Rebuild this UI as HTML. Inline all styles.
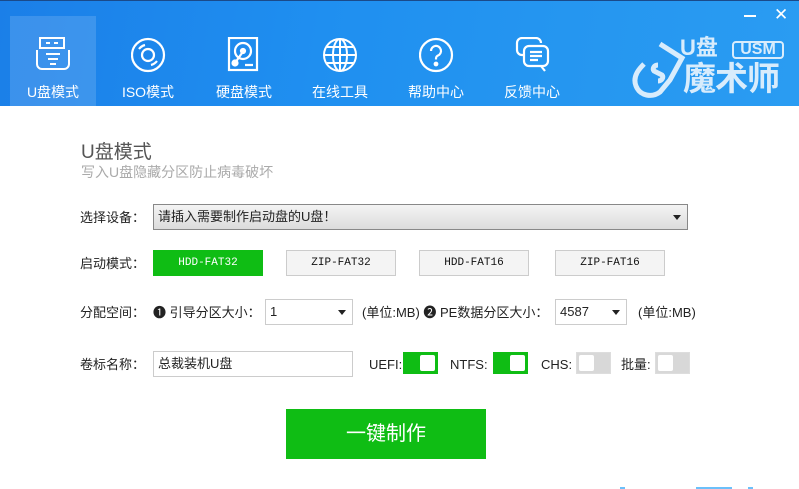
<!DOCTYPE html>
<html><head><meta charset="utf-8"><style>
*{margin:0;padding:0;box-sizing:border-box}
body{width:799px;height:489px;overflow:hidden;background:#fff;font-family:"Liberation Sans","Noto Sans CJK SC",sans-serif;position:relative;font-size:13px;color:#222}
.hdr{position:absolute;left:0;top:0;width:799px;height:106px;background:linear-gradient(100deg,#1b7fe8 0%,#1f8ff0 40%,#2596f0 70%,#2a9cf2 100%);border-top:1px solid #1a4a8a}
.tab{position:absolute;top:15px;width:86px;height:91px;color:#fff;text-align:center;font-size:14px}
.tab.act{background:rgba(255,255,255,.14)}
.tab svg{position:absolute;left:26px;top:21px}
.tab span{position:absolute;left:0;right:0;top:66px;line-height:20px}
.abs{position:absolute}
.lbl{position:absolute;font-size:13px;color:#222;line-height:16px}
.btn{position:absolute;top:250px;width:110px;height:26px;border:1px solid #ccc;background:#f4f4f4;font-family:"Liberation Mono",monospace;font-size:11px;text-align:center;line-height:24px;color:#111}
.sel{position:absolute;border:1px solid #ccc;background:#fff;height:26px;line-height:24px;padding-left:4px}
.tri{position:absolute;right:6px;top:10px;width:0;height:0;border-left:4px solid transparent;border-right:4px solid transparent;border-top:5px solid #222}
.sw{position:absolute;top:352px;width:35px;height:22px;border:1px solid #0fbd14;background:#0fbd14}
.sw i{position:absolute;right:2px;top:2px;width:15px;height:16px;background:#fff;border-radius:2px}
.sw.off{background:#d8d8d8;border-color:#ddd}
.sw.off i{left:2px;right:auto}
</style></head><body>
<div class="hdr">
 <div class="abs" style="left:744px;top:14px;width:12px;height:2px;background:#fff"></div>
 <div class="abs" style="left:774px;top:4px;color:#fff;font-size:17px">✕</div>
 <div class="tab act" style="left:10px"><svg width="34" height="34" viewBox="0 0 34 34" fill="none" stroke="#fff" stroke-width="2"><rect x="4" y="1" width="24" height="10"/><path d="M10 6h4M18 6h4"/><path d="M1 13v14a5 5 0 0 0 5 5h22a5 5 0 0 0 5-5V13"/><path d="M10 17h14M12 22h10M14 27h6"/></svg><span>U盘模式</span></div>
 <div class="tab" style="left:105px"><svg width="36" height="36" viewBox="0 0 36 36" fill="none" stroke="#fff" stroke-width="2.2"><circle cx="17" cy="18" r="16"/><circle cx="17" cy="18" r="6"/><path d="M8 12a11 11 0 0 1 6-4M26 24a11 11 0 0 1-6 4"/></svg><span>ISO模式</span></div>
 <div class="tab" style="left:201px"><svg width="32" height="36" viewBox="0 0 32 36" fill="none" stroke="#fff" stroke-width="2.2"><rect x="2" y="1" width="28" height="32"/><circle cx="16" cy="14" r="8"/><circle cx="16" cy="14" r="2" fill="#fff"/><circle cx="8" cy="26" r="2.5" fill="#fff"/><path d="M8 26l7-10M18 28h8"/></svg><span>硬盘模式</span></div>
 <div class="tab" style="left:297px"><svg width="36" height="36" viewBox="0 0 36 36" fill="none" stroke="#fff" stroke-width="2"><circle cx="17" cy="18" r="16"/><ellipse cx="17" cy="18" rx="7" ry="16"/><path d="M17 2v32M1 18h32M4 10h26M4 26h26"/></svg><span>在线工具</span></div>
 <div class="tab" style="left:393px"><svg width="36" height="36" viewBox="0 0 36 36" fill="none" stroke="#fff" stroke-width="2.2"><circle cx="17" cy="18" r="16"/><path d="M12 14a5 5 0 1 1 7 4.5c-2 1-2 2-2 4"/><circle cx="17" cy="27" r="1.3" fill="#fff"/></svg><span>帮助中心</span></div>
 <div class="tab" style="left:489px"><svg width="36" height="36" viewBox="0 0 36 36" fill="none" stroke="#fff" stroke-width="2.2"><path d="M8 18h-1a5 5 0 0 1-5-5V6a5 5 0 0 1 5-5h14a5 5 0 0 1 5 5"/><rect x="9" y="9" width="24" height="20" rx="5"/><path d="M15 15h12M15 19h12M15 23h8M26 29l4 5"/></svg><span>反馈中心</span></div>
 <svg class="abs" style="left:630px;top:38px" width="60" height="62" viewBox="0 0 60 62" fill="none" stroke="#d8ecfc" stroke-width="5"><path d="M30 5l22 14-12 22-10 12c-8 6-20 4-24-6s4-18 8-22"/><path d="M28 26c-4 0-6 4-4 6l8 4c2 2 0 6-4 6"/></svg>
 <div class="abs" style="left:680px;top:36px;color:#d8ecfc;font-size:22px;font-weight:bold;line-height:22px">U盘</div>
 <div class="abs" style="left:732px;top:40px;width:52px;height:18px;border:2px solid #d8ecfc;border-radius:4px;color:#d8ecfc;font-size:16px;line-height:14px;text-align:center;font-weight:bold">USM</div>
 <div class="abs" style="left:683px;top:60px;color:#d8ecfc;font-size:33px;font-weight:bold;line-height:36px;letter-spacing:-1px">魔术师</div>
</div>
<div class="abs" style="left:81px;top:137px;font-size:19px;color:#555">U盘模式</div>
<div class="abs" style="left:81px;top:162px;font-size:14px;color:#aaa">写入U盘隐藏分区防止病毒破坏</div>
<div class="lbl" style="left:80px;top:210px">选择设备：</div>
<div class="sel" style="left:153px;top:204px;width:535px;border-color:#888;background:linear-gradient(#f4f4f4,#dcdcdc)">请插入需要制作启动盘的U盘！<span class="tri"></span></div>
<div class="lbl" style="left:80px;top:256px">启动模式：</div>
<div class="btn" style="left:153px;background:#0fbd14;border-color:#0fbd14;color:#fff">HDD-FAT32</div>
<div class="btn" style="left:286px">ZIP-FAT32</div>
<div class="btn" style="left:419px">HDD-FAT16</div>
<div class="btn" style="left:555px">ZIP-FAT16</div>
<div class="lbl" style="left:80px;top:305px">分配空间：</div>
<div class="lbl" style="left:153px;top:305px">❶ 引导分区大小：</div>
<div class="sel" style="left:265px;top:299px;width:88px">1<span class="tri"></span></div>
<div class="lbl" style="left:362px;top:305px">(单位:MB) ❷ PE数据分区大小：</div>
<div class="sel" style="left:555px;top:299px;width:72px">4587<span class="tri"></span></div>
<div class="lbl" style="left:638px;top:305px">(单位:MB)</div>
<div class="lbl" style="left:80px;top:357px">卷标名称：</div>
<div class="sel" style="left:153px;top:351px;width:200px">总裁装机U盘</div>
<div class="lbl" style="left:369px;top:357px">UEFI:</div><div class="sw" style="left:403px"><i></i></div>
<div class="lbl" style="left:450px;top:357px">NTFS:</div><div class="sw" style="left:493px"><i></i></div>
<div class="lbl" style="left:541px;top:357px">CHS:</div><div class="sw off" style="left:576px"><i></i></div>
<div class="lbl" style="left:621px;top:357px">批量:</div><div class="sw off" style="left:655px"><i></i></div>
<div class="abs" style="left:286px;top:409px;width:200px;height:50px;background:#0fbd14;color:#fff;font-size:20px;text-align:center;line-height:50px">一键制作</div>
<div class="abs" style="left:696px;top:487px;width:36px;height:2px;background:#6cc0fa"></div>
<div class="abs" style="left:620px;top:487px;width:5px;height:2px;background:#6cc0fa"></div>
<div class="abs" style="left:748px;top:487px;width:5px;height:2px;background:#6cc0fa"></div>
</body></html>
